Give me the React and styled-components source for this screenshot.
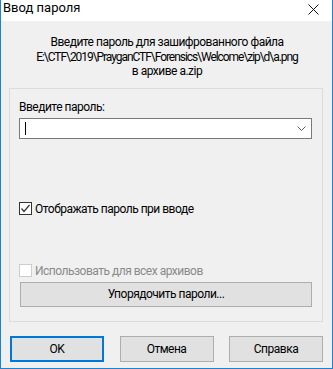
import styled, { createGlobalStyle } from 'styled-components';

const GlobalStyle = createGlobalStyle`
  html, body {
    margin: 0;
    padding: 0;
    background: #f0f0f0;
  }
  * {
    box-sizing: border-box;
  }
`;

const Window = styled.div`
  width: 333px;
  height: 369px;
  display: flex;
  flex-direction: column;
  background: #f0f0f0;
  border-left: 1px solid #1883d7;
  border-right: 1px solid #1883d7;
  border-bottom: 1px solid #1883d7;
  font-family: Roboto, "Liberation Sans", sans-serif;
  font-size: 12px;
  letter-spacing: -0.5px;
  color: #000;
`;

const TitleBar = styled.div`
  height: 21px;
  display: flex;
  align-items: flex-start;
  justify-content: space-between;
  background: #fff;
  padding: 1px 13px 0 2px;
`;

const Title = styled.span`
  font-size: 13px;
  letter-spacing: 0;
  line-height: 14px;
`;

const CloseIcon = () => (
  <svg width="11" height="11" viewBox="0 0 11 11" style={{ marginTop: 3 }}>
    <path d="M0.5 0.5 L10.5 10.5 M10.5 0.5 L0.5 10.5" stroke="#111" strokeWidth="1" />
  </svg>
);

const Body = styled.div`
  flex: 1;
  display: flex;
  flex-direction: column;
  padding: 14px 9px 0 8px;
`;

const Message = styled.div`
  text-align: center;
  line-height: 14.5px;
  padding-left: 2px;
`;

const Path = styled.span`
  letter-spacing: -1.05px;
`;

const Group = styled.div`
  margin-top: 9px;
  border: 1px solid #dcdcdc;
  display: flex;
  flex-direction: column;
  padding: 11px 10px 14px 9px;
`;

const Label = styled.div`
  line-height: 14px;
`;

const Combo = styled.div`
  margin-top: 4px;
  height: 21px;
  background: #fff;
  border: 1px solid #7a7a7a;
  display: flex;
  align-items: center;
  justify-content: space-between;
  padding: 0 5px 0 5px;
`;

const Caret = styled.span`
  width: 1px;
  height: 13px;
  background: #000;
`;

const CheckRow = styled.label`
  margin-top: ${(p) => p.$top}px;
  display: flex;
  align-items: center;
  gap: 3px;
  line-height: 14px;
  color: ${(p) => (p.$disabled ? '#8a8a8a' : '#000')};
`;

const Box = styled.span`
  width: 13px;
  height: 13px;
  background: #fff;
  border: 1px solid ${(p) => (p.$disabled ? '#cccccc' : '#333333')};
  display: flex;
  align-items: center;
  justify-content: center;
`;

const WideButton = styled.div`
  margin-top: 4px;
  margin-left: 1px;
  height: 25px;
  background: #e1e1e1;
  border: 1px solid #adadad;
  display: flex;
  align-items: center;
  justify-content: center;
`;

const Footer = styled.div`
  display: flex;
  justify-content: space-between;
  margin-top: 14px;
  padding-left: 1px;
`;

const Button = styled.div`
  width: 94px;
  height: 26px;
  background: #e1e1e1;
  border: ${(p) => (p.$primary ? '2px solid #0078d7' : '1px solid #adadad')};
  display: flex;
  align-items: center;
  justify-content: center;
`;

export default function App() {
  return (
    <>
      <GlobalStyle />
      <Window>
        <TitleBar>
          <Title>Ввод пароля</Title>
          <CloseIcon />
        </TitleBar>
        <Body>
          <Message>
            Введите пароль для зашифрованного файла
            <br />
            <Path>E:\CTF\2019\PrayganCTF\Forensics\Welcome\zip\d\a.png</Path>
            <br />в архиве a.zip
          </Message>
          <Group>
            <Label>Введите пароль:</Label>
            <Combo>
              <Caret />
              <svg width="9" height="5" viewBox="0 0 9 5">
                <path d="M0.5 0.5 L4.5 4.5 L8.5 0.5" stroke="#606060" fill="none" />
              </svg>
            </Combo>
            <CheckRow $top={63}>
              <Box>
                <svg width="11" height="11" viewBox="0 0 11 11">
                  <path d="M1.5 5.5 L4 8.5 L9.5 2" stroke="#333" fill="none" strokeWidth="1.2" />
                </svg>
              </Box>
              Отображать пароль при вводе
            </CheckRow>
            <CheckRow $top={48} $disabled>
              <Box $disabled />
              Использовать для всех архивов
            </CheckRow>
            <WideButton>Упорядочить пароли...</WideButton>
          </Group>
          <Footer>
            <Button $primary>OK</Button>
            <Button>Отмена</Button>
            <Button>Справка</Button>
          </Footer>
        </Body>
      </Window>
    </>
  );
}
